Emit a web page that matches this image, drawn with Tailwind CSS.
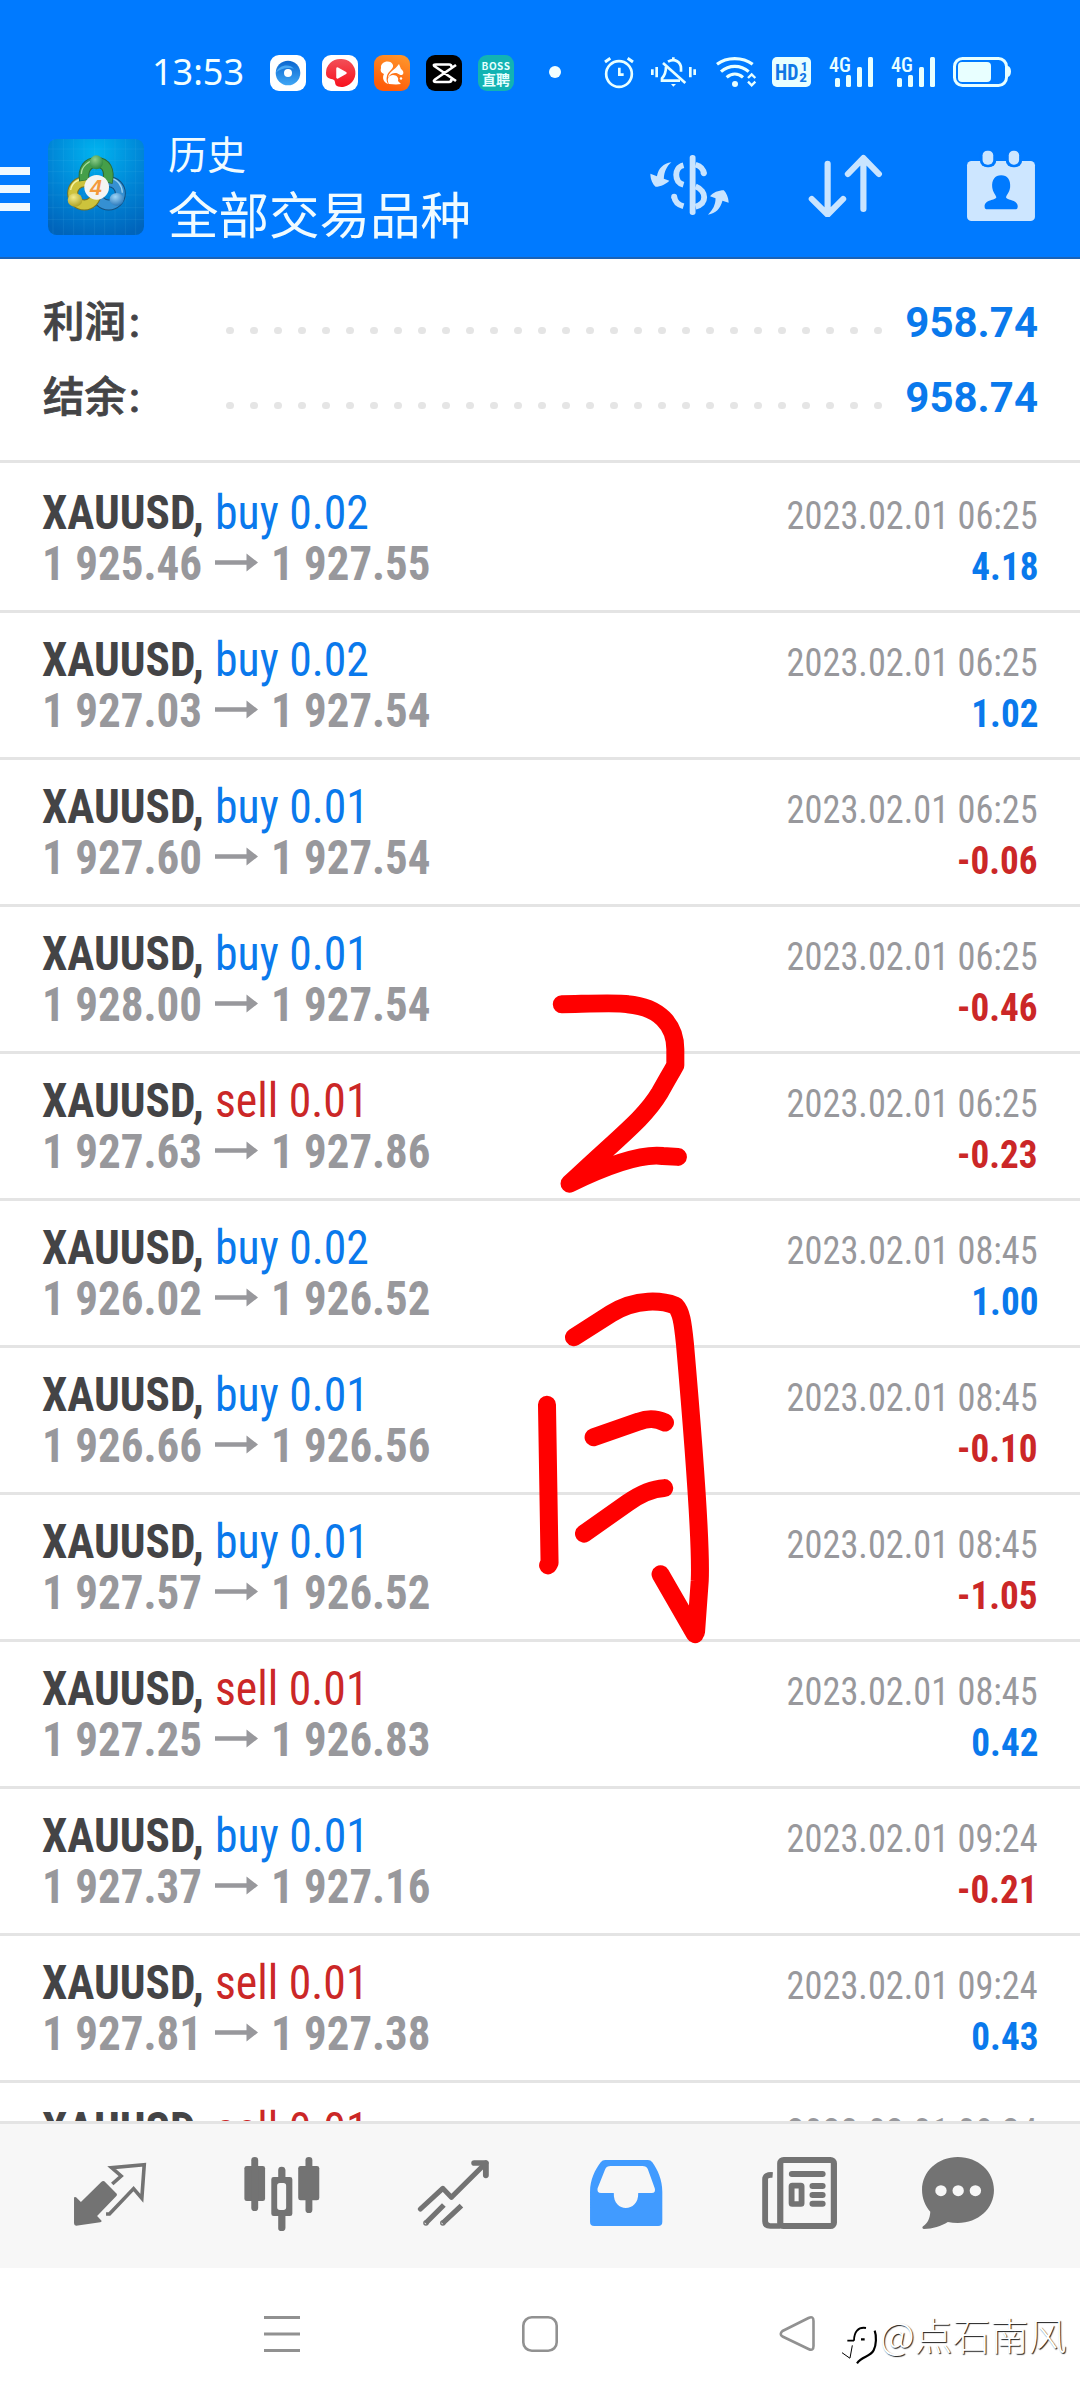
<!DOCTYPE html>
<html lang="zh-CN">
<head>
<meta charset="utf-8">
<title>历史</title>
<script src="https://cdn.jsdelivr.net/npm/@tailwindcss/browser@4"></script>
</head>
<body class="bg-white">
<div class="relative flex h-[2400px] w-[1080px] flex-col overflow-hidden bg-white font-['Roboto','Noto_Sans_CJK_SC',sans-serif]">

  <header class="flex h-[259px] shrink-0 flex-col border-b-2 border-[#1a63b8] bg-[#007aff] text-white">
    <!-- status bar -->
    <div class="flex h-[101px] items-start pt-[45px]">
      <div class="ml-[152px] w-[118px] pt-[2px] font-['Noto_Sans',sans-serif] text-[36px] leading-[49px] text-[#f2ffff]">13:53</div>
      <div class="flex gap-4 pt-2.5">
        <svg class="size-9" viewBox="0 0 36 36"><defs><linearGradient id="ga" x1="0" y1="0" x2="0" y2="1"><stop offset="0" stop-color="#0b66cf"/><stop offset="1" stop-color="#3fa6f5"/></linearGradient></defs><rect width="36" height="36" rx="9" fill="#fff"/><circle cx="18" cy="18" r="12.3" fill="url(#ga)"/><path d="M6 18C8 10 20 8 24 14C20 12 10 13 6 18Z" fill="#4aa8f4"/><circle cx="18" cy="18" r="4" fill="#fff"/></svg>
        <svg class="size-9" viewBox="0 0 36 36"><defs><linearGradient id="gb" x1="0" y1="0" x2="0" y2="1"><stop offset="0" stop-color="#f25058"/><stop offset="1" stop-color="#f8101c"/></linearGradient></defs><rect width="36" height="36" rx="9" fill="#fff"/><path d="M18 4a14 14 0 1 1-2 27.500C12 30 14 27 12 25C8 23 4 24 4 18A14 14 0 0 1 18 4Z" fill="url(#gb)"/><path d="M15.500 13.500L23.500 18L15.500 22.500Z" fill="#fff" stroke="#fff" stroke-width="2.500" stroke-linejoin="round"/></svg>
        <svg class="size-9" viewBox="0 0 36 36"><defs><linearGradient id="gc" x1="1" y1="0" x2=".6" y2="1"><stop offset="0" stop-color="#ff9a2e"/><stop offset="1" stop-color="#ff5d0a"/></linearGradient></defs><rect width="36" height="36" rx="9" fill="url(#gc)"/><path d="M7 13C6 6 17 4 19 10C20 14 14 16 13 21C12 25 13 28 15 29C9 28 8 22 10 19C7 18 6 16 7 13Z" fill="#fff"/><path d="M25 9L27 14C30 16 30 19 28 20C24 20 25 18 21 18C17 18 15 21 14 23C14 17 21 15 25 9Z" fill="#fff"/><path d="M15 29C12 24 15 20 19 20C23 20 25 23 24 26L27 29L22 29.500Z" fill="#fff"/><circle cx="27" cy="23.500" r="1.200" fill="#fff"/></svg>
        <svg class="size-9" viewBox="0 0 36 36"><rect width="36" height="36" rx="9" fill="#000"/><path d="M30 10L9 24.500C7 26 8 27 10 27H23C25 27 25.500 26 25.500 24M30 26L9 11.500C7 10 8 9.500 10 9.500H23C25 9.500 25.500 10 25.500 12" fill="none" stroke="#fff" stroke-width="2.700"/></svg>
        <div class="flex size-9 flex-col items-center justify-center rounded-[9px] bg-[#12b3b3] font-['Noto_Sans_CJK_SC',sans-serif] font-bold text-[#e6ffff]"><span class="text-[10px] leading-[13px] tracking-[0.5px]">BOSS</span><span class="text-[14px] leading-[15px]">直聘</span></div>
      </div>
      <div class="ml-[35px] mt-[21px] size-3 rounded-full bg-[#f2ffff]"></div>
      <div class="ml-[34px] flex">
        <svg class="h-14 w-[50px]" viewBox="0 0 150 168" fill="none" stroke="#e8ffff" stroke-width="8"><circle cx="72" cy="87" r="38.500"/><path d="M73 68V89H86" stroke-width="8"/><path d="M30 51L46 40M114 51L98 40" stroke-width="9"/></svg>
        <svg class="h-14 w-[60px]" viewBox="150 0 180 168" fill="none" stroke="#e8ffff" stroke-width="8"><path d="M172 73V90M185 66V97M286 66V97M299 73V90"/><path d="M235 37V45M219 50C240 38 258 52 258 70V80M213 65C213 83 208 92 201 100V107H255"/><path d="M204 54L271 114"/><path d="M228 117H243L235 125Z" fill="#e8ffff" stroke="none"/></svg>
        <svg class="h-14 w-[60px]" viewBox="330 0 180 168" fill="none" stroke="#e8ffff" stroke-width="9.500"><path d="M366 58C395 35 443 35 473 58M378 80C402 59 437 59 461 80M395 97C410 84 429 84 444 97"/><circle cx="420" cy="117" r="9" fill="#e8ffff" stroke="none"/><path d="M459 99L470 88L481 99M459 110L470 121L481 110" stroke-width="7"/></svg>
        <svg class="h-14 w-[60px]" viewBox="510 0 180 168"><rect x="531" y="36" width="117" height="90" rx="15" fill="#e8ffff"/><g fill="#1077e6" font-family="Roboto Condensed, Roboto, sans-serif" font-weight="700"><text x="540" y="105" font-size="66" textLength="70" lengthAdjust="spacingAndGlyphs">HD</text><text x="617" y="77" font-size="41">1</text><text x="613" y="111" font-size="41" textLength="23" lengthAdjust="spacingAndGlyphs">2</text></g></svg>
        <svg class="h-14 w-[62px]" viewBox="825 45 62 56" fill="#e8ffff"><text x="829" y="71.500" font-family="Roboto Condensed, Roboto, sans-serif" font-size="20.500" font-weight="500" textLength="22" lengthAdjust="spacingAndGlyphs">4G</text><rect x="835" y="78" width="5" height="9" rx="1.500"/><rect x="846" y="75" width="5" height="12" rx="1.500"/><rect x="857" y="67" width="5" height="20" rx="1.500"/><rect x="868" y="57" width="5" height="30" rx="1.500"/></svg>
        <svg class="h-14 w-[62px]" viewBox="825 45 62 56" fill="#e8ffff"><text x="829" y="71.500" font-family="Roboto Condensed, Roboto, sans-serif" font-size="20.500" font-weight="500" textLength="22" lengthAdjust="spacingAndGlyphs">4G</text><rect x="835" y="78" width="5" height="9" rx="1.500"/><rect x="846" y="75" width="5" height="12" rx="1.500"/><rect x="857" y="67" width="5" height="20" rx="1.500"/><rect x="868" y="57" width="5" height="30" rx="1.500"/></svg>
        <svg class="h-14 w-[64px]" viewBox="949 45 64 56"><rect x="954.500" y="58.500" width="52" height="27" rx="8" fill="none" stroke="#e8ffff" stroke-width="3"/><rect x="958" y="62" width="33" height="20" rx="4" fill="#e8ffff"/><path d="M1008 66C1012 67 1012 76 1008 77Z" fill="#e8ffff"/></svg>
      </div>
    </div>
    <!-- title bar -->
    <div class="flex h-[156px] items-start">
      <div class="mt-[66px] flex w-[30px] flex-col gap-2.5">
        <div class="h-2 bg-[#eef8ff]"></div><div class="h-2 bg-[#eef8ff]"></div><div class="h-2 bg-[#eef8ff]"></div>
      </div>
      <svg class="ml-[18px] mt-[38px] size-24" viewBox="24 27 288 288">
        <defs>
          <radialGradient id="bg" cx=".5" cy=".15" r=".9"><stop offset="0" stop-color="#00b4f0"/><stop offset=".55" stop-color="#0085d6"/><stop offset="1" stop-color="#0064bb"/></radialGradient>
          <radialGradient id="gr" cx=".4" cy=".3" r=".8"><stop offset="0" stop-color="#8fd08a"/><stop offset="1" stop-color="#1f7d33"/></radialGradient>
          <radialGradient id="ye" cx=".4" cy=".3" r=".8"><stop offset="0" stop-color="#f2ec8a"/><stop offset="1" stop-color="#a89a1a"/></radialGradient>
          <radialGradient id="bl" cx=".4" cy=".3" r=".8"><stop offset="0" stop-color="#9fd6f7"/><stop offset="1" stop-color="#1f6fb5"/></radialGradient>
        </defs>
        <rect x="24" y="27" width="288" height="288" rx="26" fill="url(#bg)"/>
        <path d="M39 27V315M70 27V315M101 27V315M132 27V315M163 27V315M194 27V315M225 27V315M256 27V315M287 27V315M24 57H312M24 91H312M24 125H312M24 159H312M24 195H312M24 233H312M24 268H312" stroke="#5cc4f2" stroke-opacity=".18" stroke-width="2"/>
        <g fill="none">
          <circle cx="206" cy="190" r="35" stroke="#14507f" stroke-width="33"/><circle cx="206" cy="190" r="35" stroke="#3590d2" stroke-width="27"/><path d="M212 145C232 148 246 165 247 188" stroke="#9ad2f2" stroke-width="4"/>
          <circle cx="133" cy="190" r="35" stroke="#7b7420" stroke-width="33"/><circle cx="133" cy="190" r="35" stroke="#cdc33c" stroke-width="27"/><path d="M92 180C95 160 112 146 132 147" stroke="#f6f3a0" stroke-width="4"/>
          <path d="M133 152C127 116 145 97 169 97C198 97 211 120 202 158" stroke="#2c6a35" stroke-width="32"/><path d="M133 150C127 116 145 97 169 97C198 97 211 120 203 156" stroke="#459f49" stroke-width="26"/><path d="M124 132C124 110 145 91 169 90" stroke="#a8dd9c" stroke-width="4"/>
        </g>
        <ellipse cx="169" cy="97" rx="20" ry="21" fill="url(#gr)"/>
        <ellipse cx="105" cy="210" rx="22" ry="20" fill="url(#ye)"/>
        <ellipse cx="230" cy="208" rx="21" ry="19" fill="url(#bl)"/>
        <circle cx="170" cy="172" r="37" fill="#f4f4f2"/>
        <text x="168" y="194" text-anchor="middle" font-family="Liberation Sans, sans-serif" font-style="italic" font-weight="700" font-size="64" fill="#f39a3d">4</text>
      </svg>
      <div class="ml-[24px] flex w-[481px] flex-col pt-[25px] font-['Noto_Sans_CJK_SC',sans-serif] text-[#f0fbff]">
        <div class="text-[39px] leading-[52px]">历史</div>
        <div class="text-[50.500px] leading-[69px]">全部交易品种</div>
      </div>
      <svg class="mt-[52px] h-16 w-20" viewBox="318 459 232 192" preserveAspectRatio="none" fill="#c9e4ff"><rect x="436" y="465" width="17" height="180" rx="8"/><g fill="none" stroke="#c9e4ff" stroke-width="17"><path d="M418 496C402 500 397 514 397 524C397 538 404 550 418 554M453 494C466 498 476 508 477 521M453 559C470 566 478 580 478 592C478 606 468 616 453 620"/><path d="M391 590C393 605 404 615 418 619"/></g><circle cx="391" cy="590" r="8.500"/><circle cx="477" cy="520" r="8.500"/><path d="M383 487C360 490 345 505 341 529L322 521C322 540 330 553 337 560C352 560 368 552 377 542L361 536C362 515 370 498 383 487ZM489 644C512 640 525 625 531 602L549 608C549 593 541 577 535 571C520 571 503 578 495 589L511 595C511 615 503 630 489 644Z"/></svg>
      <svg class="ml-[78px] mt-[52px] h-16 w-[76px]" viewBox="777 459 221 192" preserveAspectRatio="none" fill="none" stroke="#c9e4ff" stroke-width="18" stroke-linecap="round" stroke-linejoin="round"><path d="M837 491V643M791 597L837 644L882 597M941 627V475M896 522L941 474L986 522"/></svg>
      <svg class="ml-[83px] mt-[49px] h-[72px] w-[70px]" viewBox="1240 450 203 216" preserveAspectRatio="none"><rect x="1243" y="483" width="197" height="180" rx="13" fill="#cde6ff"/><rect x="1280" y="440" width="48" height="62" rx="22" fill="#007aff"/><rect x="1355" y="440" width="48" height="62" rx="22" fill="#007aff"/><rect x="1288" y="452" width="31" height="42" rx="14" fill="#cde6ff"/><rect x="1364" y="452" width="30" height="42" rx="14" fill="#cde6ff"/><path d="M1342 526C1360 526 1370 540 1368 562C1366 578 1358 584 1356 592C1358 602 1390 598 1390 620Q1390 628 1382 628H1302Q1294 628 1294 620C1294 598 1326 602 1328 592C1326 584 1318 578 1316 562C1314 540 1324 526 1342 526Z" fill="#007aff"/></svg>
    </div>
  </header>

  <!-- totals -->
  <section id="totals" class="flex h-[204px] shrink-0 flex-col border-b-3 border-[#e4e4e4] pt-[26px] text-[42px] font-medium leading-[75px]"></section>

  <!-- deals -->
  <main id="deals" class="min-h-0 flex-1 overflow-hidden pt-[3px]"></main>

  <!-- tabs -->
  <nav class="flex h-[147px] shrink-0 items-start border-t-3 border-[#e4e4e4] bg-[#f7f7f7] pt-[31px]">
    <svg class="ml-[73px] h-[77px] w-[74px]" viewBox="212 285 215 231" preserveAspectRatio="none"><path d="M303 364L339 401Q341 405 338 408L282 468L295 482Q296 486 291 487L221 497Q215 497 215 490V413Q216 409 221 412L235 426L294 366Q299 361 303 364Z" fill="#737373"/><path d="M326 372L352 348L324 323L419 314L412 415L388 386L318 462H308" fill="none" stroke="#737373" stroke-width="10.500"/></svg>
    <svg class="ml-[96px] h-[77px] w-[78px]" viewBox="705 285 226 231" preserveAspectRatio="none" fill="#737373"><rect x="709" y="318" width="60" height="105" rx="7"/><rect x="729" y="291" width="20" height="162" rx="10"/><rect x="865" y="318" width="61" height="103" rx="7"/><rect x="886" y="291" width="20" height="168" rx="10"/><path d="M807 351V330Q807 320 817 320T828 330V351H841Q848 351 848 358V461Q848 468 841 468H828V503Q828 513 817 513T807 503V468H794Q787 468 787 461V358Q787 351 794 351ZM812 369Q804 369 804 377V442Q804 450 812 450H822Q830 450 830 442V377Q830 369 822 369Z" fill-rule="evenodd"/></svg>
    <svg class="ml-[96px] h-[77px] w-[73px]" viewBox="1211 285 212 231" preserveAspectRatio="none" fill="none" stroke="#737373" stroke-width="15" stroke-linejoin="round"><path d="M1221 447L1286 385L1311 412L1411 309" stroke-linecap="round"/><path d="M1377 309H1411V346" stroke-width="17" stroke-linecap="round"/><path d="M1289 435L1236 490M1340 437L1285 490"/><circle cx="1237" cy="489" r="2" stroke-width="12"/><circle cx="1286" cy="489" r="2" stroke-width="12"/></svg>
    <svg class="ml-[99px] h-[77px] w-[74px]" viewBox="143 285 215 231" preserveAspectRatio="none"><path d="M190 300H314Q322 300 327 307C343 330 356 360 356 395V485Q356 498 344 498H158Q146 498 146 485V395C146 360 160 330 177 307Q182 300 190 300ZM206 318Q194 318 190 328L168 385Q165 399 178 399H215C214 430 232 444 250 444S287 430 286 399H325Q338 399 334 385L314 328Q310 318 298 318Z" fill="#419bff" fill-rule="evenodd"/></svg>
    <svg class="ml-[98px] h-[77px] w-[77px]" viewBox="643 285 224 231" preserveAspectRatio="none" fill="none" stroke="#737373"><rect x="699" y="300" width="156" height="198" rx="10" stroke-width="18"/><path d="M677 345Q655 343 655 358V484Q655 498 670 498H700" stroke-width="17"/><path d="M733 342H822M793 378H822M793 405H822M793 431H822" stroke-width="18" stroke-linecap="round"/><rect x="732" y="377" width="29" height="55" rx="2" stroke-width="17"/></svg>
    <svg class="ml-[83px] h-[77px] w-[74px]" viewBox="1106 285 215 231" preserveAspectRatio="none"><path d="M1213 291C1272 291 1318 334 1318 390C1318 446 1272 489 1213 489C1203 489 1193 488 1184 486C1165 498 1140 507 1114 507Q1107 504 1112 499C1126 489 1132 474 1133 455C1118 438 1109 415 1109 390C1109 334 1155 291 1213 291Z" fill="#737373"/><g fill="#f7f7f7"><circle cx="1164" cy="392" r="16.500"/><circle cx="1214" cy="392" r="16.500"/><circle cx="1264" cy="392" r="16.500"/></g></svg>
  </nav>

  <!-- system navigation -->
  <footer class="flex h-[132px] shrink-0 items-start bg-white pt-[46px]">
    <svg class="ml-[262px] size-10" viewBox="0 0 40 40" stroke="#919191" stroke-width="3"><path d="M2 3.500H38M2 20H38M2 36.500H38"/></svg>
    <svg class="ml-[218px] size-10" viewBox="0 0 40 40" fill="none" stroke="#919191" stroke-width="2.600"><rect x="3.300" y="3.300" width="33.400" height="33.400" rx="8.500"/></svg>
    <svg class="ml-[218px] size-10" viewBox="0 0 40 40" fill="none" stroke="#919191" stroke-width="2.600" stroke-linejoin="round"><path d="M30.500 4Q35.500 1.500 35.500 7V32Q35.500 37.500 30.500 35L4.500 22.500Q1 20 4.500 17Z"/></svg>
  </footer>

  <!-- handwritten mark -->
  <svg class="pointer-events-none absolute left-[500px] top-[960px] h-[700px] w-[580px]" viewBox="0 0 1568 1568" preserveAspectRatio="none" fill="none" stroke="#ff0000" stroke-width="18" stroke-linecap="round" stroke-linejoin="round">
    <g>
      <path vector-effect="non-scaling-stroke" d="M167 99C240 98 320 95 345 99C430 105 474 145 474 200V236C460 256 450 270 432 297C390 355 330 390 188 501C290 460 380 433 440 439L481 441"/>
      <path vector-effect="non-scaling-stroke" d="M200 845L300 792C370 756 440 763 474 774C490 788 494 810 500 860C520 1050 545 1300 540 1390L530 1505M527 1510L434 1376"/>
      <path vector-effect="non-scaling-stroke" d="M127 996L134 1350L130 1356"/>
      <path vector-effect="non-scaling-stroke" d="M253 1069L375 1034C400 1026 420 1026 446 1036M227 1285L345 1216C390 1190 420 1184 444 1183"/>
    </g>
  </svg>

  <!-- watermark -->
  <div class="absolute left-[838px] top-[2310px] flex h-[54px] items-start">
    <svg class="h-[54px] w-[42px]" viewBox="24 0 126 162" fill="none" stroke="#000" stroke-width="5.500"><path d="M108 54C84 50 72 66 72 92M52 92H72" /><path d="M93 88H104M134 62C140 78 139 105 131 121C120 142 96 138 81 160" stroke-width="6.500"/><path d="M67 106L60 144M36 128L60 145" stroke-width="3"/></svg>
    <div class="-mt-[3px] whitespace-nowrap font-['Noto_Sans_CJK_SC',sans-serif] text-[38px] font-light leading-[54px] text-white [text-shadow:1px_1px_1px_rgba(0,0,0,0.9)]">@点石南风</div>
  </div>
</div>

<script>
  const rows = [
    ['buy 0.02', '925.46', '927.55', '06:25', '4.18'],
    ['buy 0.02', '927.03', '927.54', '06:25', '1.02'],
    ['buy 0.01', '927.60', '927.54', '06:25', '-0.06'],
    ['buy 0.01', '928.00', '927.54', '06:25', '-0.46'],
    ['sell 0.01', '927.63', '927.86', '06:25', '-0.23'],
    ['buy 0.02', '926.02', '926.52', '08:45', '1.00'],
    ['buy 0.01', '926.66', '926.56', '08:45', '-0.10'],
    ['buy 0.01', '927.57', '926.52', '08:45', '-1.05'],
    ['sell 0.01', '927.25', '926.83', '08:45', '0.42'],
    ['buy 0.01', '927.37', '927.16', '09:24', '-0.21'],
    ['sell 0.01', '927.81', '927.38', '09:24', '0.43'],
    ['sell 0.01', '', '', '09:24', '']
  ];
  document.getElementById('deals').innerHTML = rows.map(([side, open, close, time, profit]) => `
    <div class="flex h-[147px] flex-col border-b-3 border-[#e4e4e4] pt-[21px] pr-[42px] pl-[42px] font-['Roboto_Condensed','Roboto',sans-serif] text-[48px] leading-[51px]">
      <div class="flex h-[51px] items-baseline justify-between whitespace-nowrap">
        <div class="flex"><span class="w-[173px] origin-left scale-x-[0.942] font-bold text-[#444446]">XAUUSD,</span><span class="origin-left scale-x-[0.952] ${side[0] === 'b' ? 'text-[#0a79ec]' : 'text-[#cb2727]'}">${side}</span></div>
        <div class="origin-right scale-x-[0.931] text-[39px] text-[#98989c]">2023.02.01 ${time}</div>
      </div>
      ${open ? `<div class="flex h-[51px] items-baseline justify-between whitespace-nowrap font-bold">
        <div class="flex text-[#98989c]"><span class="w-[173px] origin-left scale-x-[0.938]">1 ${open}</span>
          <svg class="mt-[15px] mr-[13px] h-[19px] w-[43px]" viewBox="0 0 43 19" fill="#98989c"><path d="M0 7.200H31.500V0.500L43 9.500L31.500 18.500V11.800H0Z"/></svg>
          <span class="origin-left scale-x-[0.935]">1 ${close}</span></div>
        <div class="origin-right scale-x-[0.953] text-[39px] ${profit[0] === '-' ? 'text-[#cb2727]' : 'text-[#0a79ec]'}">${profit}</div>
      </div>` : ''}
    </div>`).join('');

  const dots = Array.from({ length: 28 }, () => '<i class="size-[7.500px] rounded-full bg-[#e5e5e5]"></i>').join('');
  document.getElementById('totals').innerHTML = ['利润', '结余'].map(label => `
    <div class="flex h-[75px] items-baseline pr-[42px] pl-[43px]">
      <div class="w-[183px] text-[41.500px] text-[#444446] [-webkit-text-stroke:0.8px_#444446]">${label}<span class="ml-[3px]">:</span></div>
      <div class="flex w-[656px] -translate-y-[3px] justify-between">${dots}</div>
      <div class="flex-1 text-right font-bold text-[#0a79ec]">958.74</div>
    </div>`).join('');
</script>
</body>
</html>
